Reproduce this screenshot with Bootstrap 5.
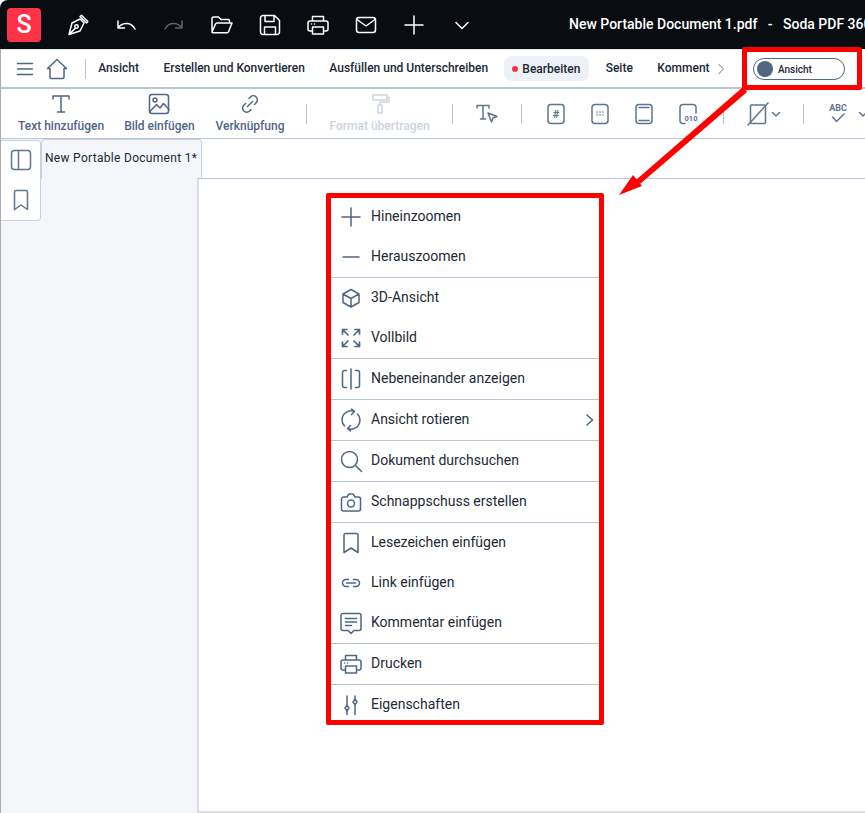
<!DOCTYPE html>
<html lang="de"><head><meta charset="utf-8"><title>Soda PDF</title>
<link href="https://cdn.jsdelivr.net/npm/bootstrap@5.3.0/dist/css/bootstrap.min.css" rel="stylesheet">
<style>
html,body{height:813px;overflow:hidden;background:#fff}
body{font-family:Roboto,"Liberation Sans",sans-serif;position:relative;width:865px}
svg{display:block;fill:none;stroke:currentColor;stroke-width:1.5;stroke-linecap:round;stroke-linejoin:round;flex:none}
svg text{fill:currentColor;stroke:none;font-family:Roboto,"Liberation Sans",sans-serif;font-weight:700;text-anchor:middle}
.i24{width:24px;height:24px}
.topbar{height:49px;background:#090c10;color:#fff;border-top-left-radius:8px;padding-left:7px;white-space:nowrap;overflow:hidden}
.applogo{width:34px;height:34px;background:#ff3347;border-radius:4px;color:#fff;font-size:25px;font-weight:500;line-height:34px;text-align:center;margin-right:25px}
.topicons{gap:24px}
.dimmed{color:#5d6268}
.doc-title{font-size:14px;font-weight:500;margin-left:95px;white-space:pre}
.menubar{height:40px;border-top:1px solid #e2e7ef;border-bottom:2px solid #b7c5d8;color:#202835;font-size:12px;font-weight:500;padding-left:12px;border-left:1px solid #aaa;white-space:nowrap;position:relative}
.slate{color:#4f6685}
.vrule{width:1px;height:20px;background:#b7c5d8;flex:none}
.menu-home{margin:0 16px 0 8px}
.tabitem{margin-left:12.25px;margin-right:12.25px;padding-bottom:2px}
.tabactive{background:#eef1f7;border-radius:8px;height:25px;padding:0 9px 0 8px;margin:0 4px}
.reddot{width:6px;height:6px;background:#ff3347;border-radius:50%;margin-right:4px}
.morechev{color:#aab4c2;margin-left:-1px}
.viewtoggle{position:absolute;left:752px;top:8px;width:92px;height:22px;border:1px solid #4f6685;border-radius:11px;font-size:10px;padding-left:3px}
.viewdot{width:16px;height:16px;border-radius:50%;background:#4f6685;margin-right:5px}
.toolbar{height:50px;border-bottom:1px solid #b7c5d8;border-left:1px solid #aaa;padding-left:17px;color:#5f7490;white-space:nowrap}
.toolbtn{color:#4f6685;font-size:12px;font-weight:500;line-height:14px;margin-right:20px;padding-bottom:2px}
.toolbtn svg{margin-bottom:3px}
.toolbtn.off{color:#cdd4df}
.nudged{margin-left:1px;margin-right:21px}
.wider{margin-right:21px}
.toolrule{margin:0 22px 0 1px}
.toolicon{margin-right:20px}
.toolicon.wider{margin-right:21px}
.iconlast{margin-right:22px}
.tinychev{width:10px;height:10px;margin-left:1px;margin-right:21px}
.abcmark text{font-size:9px}
.hashmark text{font-size:11px}
.bitsmark text{font-size:7.5px}
.workspace{height:674px;border-left:1px solid #aaa}
.leftside{width:196px;background:#f4f6f9;flex:none;position:relative}
.railbox{width:40px;height:81px;background:#fff;border:1px solid #c8d2df;border-left:0;border-radius:0 4px 4px 0;margin-top:1px;padding-top:7px;gap:16px;color:#5f7490}
.doctab{width:161px;height:40px;background:#f4f6f9;border:1px solid #c8d2df;border-bottom:0;border-radius:4px 4px 0 0;font-size:12px;color:#202835;padding:9px 0 0 3px;letter-spacing:.3px;margin-right:-5px;position:relative;white-space:nowrap}
.docarea{flex:1;border-left:2px solid #dcdee2;margin-top:39px;border-top:1px solid #b7c5d8;border-bottom:2px solid #dcdee2;position:relative}
.viewmenu{position:absolute;left:331px;top:197px;width:269px;background:#fff;color:#222a36;font-size:14px}
.viewmenu .list-group-item{height:40px;padding:0 0 1px 8px;border:0;color:inherit;background:transparent}
.viewmenu .ruled{height:41px;border-bottom:1px solid #b7c5d8}
.viewmenu svg{color:#4f6685;margin-right:8px}
.viewmenu .subchev{margin:0 4px 0 auto;width:12px;height:12px}
.frame{position:absolute;border:5px solid #f00;border-radius:2px;pointer-events:none}
.frame-toggle{left:742px;top:47px;width:120px;height:43px}
.frame-menu{left:326px;top:193px;width:278px;height:532px}
.callout{position:absolute;left:0;top:0;width:865px;height:813px;pointer-events:none;fill:#f00;stroke:none}
</style></head>
<body>
<header class="topbar d-flex align-items-center">
  <div class="applogo flex-shrink-0">S</div>
  <div class="d-flex topicons align-items-center">
    <svg class="i24" viewBox="0 0 24 24"><path d="M3 21.500 6 10l8-4 4 4-4 8zM3.500 21l5.600-5.600M14 3.500l1.500-1.300 6.300 6.300-1.300 1.500z"/><circle cx="10.500" cy="13.500" r="1.700"/></svg>
    <svg class="i24" viewBox="0 0 24 24"><path d="M4 8v7h6.500M4 15c3-5 12.500-7.500 17 1"/></svg>
    <svg class="i24 dimmed" viewBox="0 0 24 24"><path d="M20 8v7h-6.500M20 15c-3-5-12.500-7.500-17 1"/></svg>
    <svg class="i24" viewBox="0 0 24 24"><path d="M2 18V5.500A1.500 1.500 0 0 1 3.500 4h5l2.500 2.500h7A1.500 1.500 0 0 1 19.500 8v2M2 19l3.500-8a1.500 1.500 0 0 1 1.400-1h15.100l-3.500 8.800a1.500 1.500 0 0 1-1.400.9H3a1 1 0 0 1-1-.7z"/></svg>
    <svg class="i24" viewBox="0 0 24 24"><path d="M5 2.500h11.500l5 5V19a2.500 2.500 0 0 1-2.500 2.500H5A2.500 2.500 0 0 1 2.500 19V5A2.500 2.500 0 0 1 5 2.500zM7 2.500v6h9v-6M6.500 21.500V14h11v7.500"/></svg>
    <svg class="i24" viewBox="0 0 24 24"><path d="M6.500 8V3.500h11V8M6.500 18H4a2 2 0 0 1-2-2v-6a2 2 0 0 1 2-2h16a2 2 0 0 1 2 2v6a2 2 0 0 1-2 2h-2.500M6.500 14h11v7h-11zM5.500 11h.1M8.500 11h.1"/></svg>
    <svg class="i24" viewBox="0 0 24 24"><rect x="2.500" y="4.500" width="19" height="15" rx="2.500"/><path d="m3 6.500 9 6.500 9-6.500"/></svg>
    <svg class="i24" viewBox="0 0 24 24"><path d="M12 3v18M3 12h18"/></svg>
    <svg class="i24" viewBox="0 0 24 24"><path d="m6 9.500 6 6 6-6"/></svg>
  </div>
  <div class="doc-title">New Portable Document 1.pdf   -   Soda PDF 360</div>
</header>

<nav class="menubar d-flex align-items-center">
  <svg class="i24 slate" viewBox="0 0 24 24"><path d="M4.500 6.500h15M4.500 12h15M4.500 17.500h15"/></svg>
  <svg class="i24 slate menu-home" viewBox="0 0 24 24"><path d="M2.500 11.500 12 2.500l9.500 9H19V20a1.500 1.500 0 0 1-1.500 1.500h-11A1.500 1.500 0 0 1 5 20v-8.500z"/></svg>
  <span class="vrule"></span>
  <span class="tabitem">Ansicht</span>
  <span class="tabitem">Erstellen und Konvertieren</span>
  <span class="tabitem">Ausfüllen und Unterschreiben</span>
  <span class="tabactive d-flex align-items-center"><span class="reddot"></span>Bearbeiten</span>
  <span class="tabitem">Seite</span>
  <span class="tabitem me-0">Komment</span>
  <svg class="morechev i24" viewBox="0 0 24 24"><path d="m10 7.500 4.500 4.500-4.500 4.500"/></svg>
  <div class="viewtoggle d-flex align-items-center"><span class="viewdot"></span>Ansicht</div>
</nav>

<div class="toolbar d-flex align-items-center">
  <div class="toolbtn d-flex flex-column align-items-center">
    <svg class="i24" viewBox="0 0 24 24"><path d="M4 7V4h16v3M12 4v16M8.500 20h7"/></svg>Text hinzufügen</div>
  <div class="toolbtn d-flex flex-column align-items-center">
    <svg class="i24" viewBox="0 0 24 24"><rect x="2.500" y="2.500" width="19" height="19" rx="2.500"/><circle cx="8" cy="8" r="2"/><path d="m3 19.500 6.500-7 3.500 3.500 3.500-4.500 5.500 6"/></svg>Bild einfügen</div>
  <div class="toolbtn nudged d-flex flex-column align-items-center">
    <svg class="i24" viewBox="0 0 24 24"><path d="M9.500 14.500l5-5M11 6.500 12.500 5a4 4 0 0 1 5.700 5.700L16.500 12.500M13 17.500 11.500 19a4 4 0 0 1-5.700-5.700l1.700-1.800"/></svg>Verknüpfung</div>
  <span class="vrule toolrule"></span>
  <div class="toolbtn off wider d-flex flex-column align-items-center">
    <svg class="i24" viewBox="0 0 24 24"><path d="M5 3h14v5H5zM19 5.500h2v4.500H12v3M10 13h4v8h-4z"/></svg>Format übertragen</div>
  <span class="vrule toolrule"></span>
  <svg class="i24 toolicon wider" viewBox="0 0 24 24"><path d="M2 6V3.500h12V6M8 3.500V17M5.500 17h5M13 11l9 3.500-4 1.500-1.500 4z"/></svg>
  <span class="vrule toolrule"></span>
  <svg class="i24 toolicon hashmark" viewBox="0 0 24 24"><rect x="4" y="2.500" width="16" height="19" rx="3"/><text x="12" y="16">#</text></svg>
  <svg class="i24 toolicon" viewBox="0 0 24 24"><rect x="4" y="2.500" width="16" height="19" rx="3"/><path d="M9 10h.1M12 10h.1M15 10h.1M9 13h.1M12 13h.1M15 13h.1"/></svg>
  <svg class="i24 toolicon" viewBox="0 0 24 24"><rect x="4" y="2.500" width="16" height="19" rx="3"/><path d="M7 5.500h10M7 18.500h10"/></svg>
  <svg class="i24 iconlast bitsmark" viewBox="0 0 24 24"><path d="M9 21.500H7a3 3 0 0 1-3-3v-13a3 3 0 0 1 3-3h10a3 3 0 0 1 3 3V11"/><text x="15" y="19">010</text></svg>
  <span class="vrule toolrule"></span>
  <svg class="i24" viewBox="0 0 24 24"><rect x="4.500" y="3" width="15" height="18.500" rx="1"/><path d="M2 23 22 1"/></svg>
  <svg class="tinychev" viewBox="0 0 10 10"><path d="M1.500 3.500 5 7l3.500-3.500"/></svg>
  <span class="vrule toolrule"></span>
  <svg class="i24 abcmark" viewBox="0 0 24 24"><text x="12" y="8.500">ABC</text><path d="m6.500 15 4 4.500L18 12"/></svg>
  <svg class="tinychev ms-2" viewBox="0 0 10 10"><path d="M1.500 3.500 5 7l3.500-3.500"/></svg>
</div>

<main class="workspace d-flex">
  <aside class="leftside d-flex align-items-start">
    <div class="railbox d-flex flex-column align-items-center flex-shrink-0">
      <svg class="i24" viewBox="0 0 24 24"><rect x="2.500" y="2.500" width="19" height="19" rx="3"/><path d="M9.500 2.500v19"/></svg>
      <svg class="i24" viewBox="0 0 24 24"><path d="M5.500 4a1.500 1.500 0 0 1 1.500-1.500h10A1.500 1.500 0 0 1 18.500 4v17.500L12 17l-6.500 4.500z"/></svg>
    </div>
    <div class="doctab">New Portable Document 1*</div>
  </aside>
  <section class="docarea"></section>
</main>

<div class="viewmenu list-group list-group-flush">
  <div class="list-group-item d-flex align-items-center"><svg class="i24" viewBox="0 0 24 24"><path d="M12 3v18M3 12h18"/></svg>Hineinzoomen</div>
  <div class="list-group-item ruled d-flex align-items-center"><svg class="i24" viewBox="0 0 24 24"><path d="M4 12h16"/></svg>Herauszoomen</div>
  <div class="list-group-item d-flex align-items-center"><svg class="i24" viewBox="0 0 24 24"><path d="M12 3.500l8 4.500v8.500l-8 4.500-8-4.500V8zM4 8l8 4.500L20 8M12 12.500V21"/></svg>3D-Ansicht</div>
  <div class="list-group-item ruled d-flex align-items-center"><svg class="i24" viewBox="0 0 24 24"><path stroke-width="1.700" d="M3.500 8V3.500H8M3.500 3.500 9 9M16 3.500h4.500V8M20.500 3.500 15 9M3.500 16v4.500H8M3.500 20.500 9 15M16 20.500h4.500V16M20.500 20.500 15 15"/></svg>Vollbild</div>
  <div class="list-group-item ruled d-flex align-items-center"><svg class="i24" viewBox="0 0 24 24"><path d="M7.500 3.500H5.500a2 2 0 0 0-2 2v13a2 2 0 0 0 2 2h2M16.500 3.500h2a2 2 0 0 1 2 2v13a2 2 0 0 1-2 2h-2M12 2v20"/></svg>Nebeneinander anzeigen</div>
  <div class="list-group-item ruled d-flex align-items-center"><svg class="i24" viewBox="0 0 24 24"><path d="M5.500 18A9 9 0 0 1 15.500 3.500M18.500 6A9 9 0 0 1 8.500 20.500M12.500 1l3 2.500-3 3M11.500 23l-3-2.500 3-3"/></svg>Ansicht rotieren<svg class="subchev" viewBox="0 0 12 12"><path d="m3 1 5.500 5L3 11"/></svg></div>
  <div class="list-group-item ruled d-flex align-items-center"><svg class="i24" viewBox="0 0 24 24"><circle cx="10.500" cy="10.500" r="8"/><path d="m16.500 16.500 6 6"/></svg>Dokument durchsuchen</div>
  <div class="list-group-item ruled d-flex align-items-center"><svg class="i24" viewBox="0 0 24 24"><path d="M4.500 7H8l2-3h4l2 3h3.500A2 2 0 0 1 21.500 9v10a2 2 0 0 1-2 2h-15a2 2 0 0 1-2-2V9a2 2 0 0 1 2-2z"/><circle cx="12" cy="13.500" r="3.500"/></svg>Schnappschuss erstellen</div>
  <div class="list-group-item d-flex align-items-center"><svg class="i24" viewBox="0 0 24 24"><path d="M5 4a1.500 1.500 0 0 1 1.500-1.500h11A1.500 1.500 0 0 1 19 4v17.500L12 17l-7 4.500z"/></svg>Lesezeichen einfügen</div>
  <div class="list-group-item d-flex align-items-center"><svg class="i24" viewBox="0 0 24 24"><path d="M9.500 8.500H7a3.500 3.500 0 0 0 0 7h2.500M14.500 8.500H17a3.500 3.500 0 0 1 0 7h-2.500M7.500 12h9"/></svg>Link einfügen</div>
  <div class="list-group-item ruled d-flex align-items-center"><svg class="i24" viewBox="0 0 24 24"><path d="M4 2.500h16A2 2 0 0 1 22 4.500v13a2 2 0 0 1-2 2h-5l-3 3-3-3H4a2 2 0 0 1-2-2v-13a2 2 0 0 1 2-2zM6.500 7.500h11M6.500 11h11M6.500 14.500h6"/></svg>Kommentar einfügen</div>
  <div class="list-group-item ruled d-flex align-items-center"><svg class="i24" viewBox="0 0 24 24"><path d="M6.500 8V3.500h11V8M6.500 18H4a2 2 0 0 1-2-2v-6a2 2 0 0 1 2-2h16a2 2 0 0 1 2 2v6a2 2 0 0 1-2 2h-2.500M6.500 14h11v7h-11zM5.500 11h.1M8.500 11h.1"/></svg>Drucken</div>
  <div class="list-group-item d-flex align-items-center"><svg class="i24" viewBox="0 0 24 24"><path d="M8 3v9.500M8 18v3.500M16 3v3M16 11.500V21.500"/><path d="M8 12.500l2 2.500-2 3-2-3zM16 6l2 3-2 2.500L14 9z"/></svg>Eigenschaften</div>
</div>

<div class="frame frame-toggle"></div>
<div class="frame frame-menu"></div>
<svg class="callout" viewBox="0 0 865 813"><polygon points="743,87 747,92 640,184 636,180"/><polygon points="619,195 633,175 642,186"/></svg>
</body></html>
